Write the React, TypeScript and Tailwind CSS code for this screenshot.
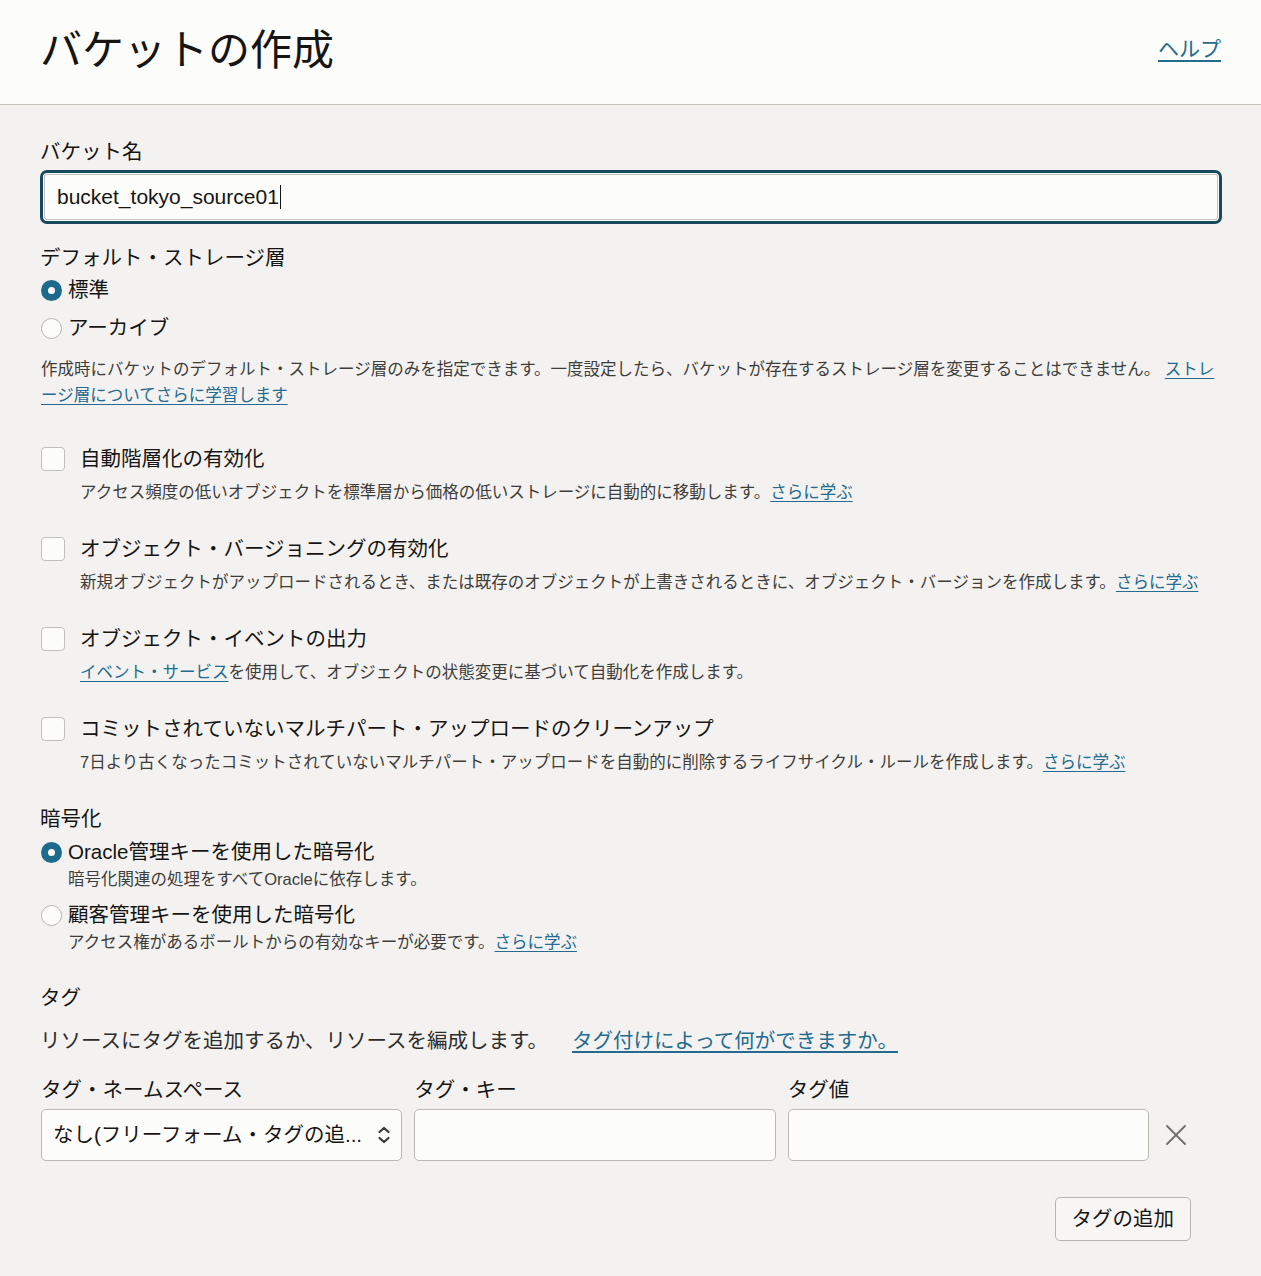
import React from 'react';

const font = "font-['Liberation_Sans','Noto_Sans_CJK_JP',sans-serif]";
const link = 'text-[#246b8f] underline underline-offset-[3px] decoration-1';

const Radio = ({ checked }: { checked?: boolean }) =>
  checked ? (
    <span className="w-[21px] h-[21px] rounded-full bg-[#1e6a8d] flex items-center justify-center shrink-0">
      <span className="w-[7px] h-[7px] rounded-full bg-white" />
    </span>
  ) : (
    <span className="w-[21px] h-[21px] rounded-full bg-[#fcfcfb] border border-[#b8b4ae] shrink-0" />
  );

const Check = ({ label, children }: { label: string; children: React.ReactNode }) => (
  <div className="flex">
    <span className="w-[24px] h-[24px] mt-[2px] ml-[1px] rounded-[4px] bg-[#fcfcfb] border border-[#c2beb8] shrink-0" />
    <div className="ml-[15px]">
      <div className="text-[20.5px] leading-[28px] text-[#161513]">{label}</div>
      <div className="mt-[6px] text-[16.5px] leading-[26px] text-[#3f3d3a]">{children}</div>
    </div>
  </div>
);

export default function App() {
  return (
    <div className={`${font} min-h-[1276px] bg-[#f3f2f1] text-[#161513]`}>
      <header className="h-[105px] bg-[#fcfcfb] border-b border-[#c4c1bd] flex items-center justify-between pl-[40px] pr-[40px]">
        <h1 className="text-[42px] leading-[50px] mt-[-2px] text-[#161513]">バケットの作成</h1>
        <a className="text-[21px] leading-[28px] text-[#246b8f] underline underline-offset-[4px] decoration-[2px] mt-[-6px]">ヘルプ</a>
      </header>

      <main className="pl-[40px] pr-[39px] pt-[33px] pb-[35px]">
        <div className="text-[20.5px] leading-[28px]">バケット名</div>
        <div className="mt-[4px] h-[54px] rounded-[7px] border-[3px] border-[#17485c] bg-[#fcfcfb] shadow-[inset_0_0_0_1px_#fff,inset_0_0_0_2px_#c6c2bd] flex items-center pl-[14px]">
          <span className="text-[21px] text-[#161513]">bucket_tokyo_source01</span>
          <span className="w-[1px] h-[24px] bg-[#161513] ml-[1px]" />
        </div>

        <div className="mt-[20px] text-[20.5px] leading-[28px]">デフォルト・ストレージ層</div>
        <div className="mt-[4px] flex items-center gap-[6px] pl-[1px]">
          <Radio checked />
          <span className="text-[20.5px] leading-[28px]">標準</span>
        </div>
        <div className="mt-[10px] flex items-center gap-[6px] pl-[1px]">
          <Radio />
          <span className="text-[20.5px] leading-[28px]">アーカイブ</span>
        </div>
        <p className="mt-[14px] text-[16.5px] leading-[26px] text-[#3f3d3a] pl-[1px]">
          作成時にバケットのデフォルト・ストレージ層のみを指定できます。一度設定したら、バケットが存在するストレージ層を変更することはできません。{' '}
          <a className={link}>ストレージ層についてさらに学習します</a>
        </p>

        <div className="mt-[37px] flex flex-col gap-[30px]">
          <Check label="自動階層化の有効化">
            アクセス頻度の低いオブジェクトを標準層から価格の低いストレージに自動的に移動します。<a className={link}>さらに学ぶ</a>
          </Check>
          <Check label="オブジェクト・バージョニングの有効化">
            新規オブジェクトがアップロードされるとき、または既存のオブジェクトが上書きされるときに、オブジェクト・バージョンを作成します。<a className={link}>さらに学ぶ</a>
          </Check>
          <Check label="オブジェクト・イベントの出力">
            <a className={link}>イベント・サービス</a>を使用して、オブジェクトの状態変更に基づいて自動化を作成します。
          </Check>
          <Check label="コミットされていないマルチパート・アップロードのクリーンアップ">
            7日より古くなったコミットされていないマルチパート・アップロードを自動的に削除するライフサイクル・ルールを作成します。<a className={link}>さらに学ぶ</a>
          </Check>
        </div>

        <div className="mt-[30px] text-[20.5px] leading-[28px]">暗号化</div>
        <div className="mt-[5px] flex items-center gap-[6px] pl-[1px]">
          <Radio checked />
          <span className="text-[20.5px] leading-[28px]">Oracle管理キーを使用した暗号化</span>
        </div>
        <div className="pl-[28px] text-[16.5px] leading-[26px] text-[#3f3d3a]">暗号化関連の処理をすべてOracleに依存します。</div>
        <div className="mt-[9px] flex items-center gap-[6px] pl-[1px]">
          <Radio />
          <span className="text-[20.5px] leading-[28px]">顧客管理キーを使用した暗号化</span>
        </div>
        <div className="pl-[28px] text-[16.5px] leading-[26px] text-[#3f3d3a]">
          アクセス権があるボールトからの有効なキーが必要です。<a className={link}>さらに学ぶ</a>
        </div>

        <div className="mt-[29px] text-[20.5px] leading-[28px]">タグ</div>
        <p className="mt-[15px] text-[20.5px] leading-[28px] text-[#2e2c2a]">
          リソースにタグを追加するか、リソースを編成します。
          <a className={`${link} ml-[24px] decoration-[2px]`}>タグ付けによって何ができますか。 </a>
        </p>

        <div className="mt-[21px] pr-[31px] pl-[1px]">
          <div className="grid grid-cols-[minmax(0,1fr)_minmax(0,1fr)_minmax(0,1fr)_30px] gap-x-[12px] gap-y-[5px] items-center">
            <div className="text-[20.5px] leading-[28px]">タグ・ネームスペース</div>
            <div className="text-[20.5px] leading-[28px]">タグ・キー</div>
            <div className="text-[20.5px] leading-[28px]">タグ値</div>
            <div />
            <div className="h-[52px] rounded-[5px] border border-[#bcb8b2] bg-[#fcfcfb] flex items-center pl-[11px] pr-[10px]">
              <span className="flex-1 min-w-0 text-[20.5px] text-[#161513] whitespace-nowrap overflow-hidden">なし(フリーフォーム・タグの追...</span>
              <svg width="14" height="20" viewBox="0 0 14 20" className="shrink-0 ml-[6px]" fill="none" stroke="#3a3836" strokeWidth="2.2" strokeLinecap="round" strokeLinejoin="round">
                <path d="M2.5 7 L7 3 L11.5 7" />
                <path d="M2.5 13 L7 17 L11.5 13" />
              </svg>
            </div>
            <div className="h-[52px] rounded-[5px] border border-[#bcb8b2] bg-[#fcfcfb]" />
            <div className="h-[52px] rounded-[5px] border border-[#bcb8b2] bg-[#fcfcfb]" />
            <div className="flex items-center justify-center">
              <svg width="22" height="22" viewBox="0 0 22 22" stroke="#6f6c68" strokeWidth="1.8" strokeLinecap="round">
                <path d="M2 2 L20 20 M20 2 L2 20" />
              </svg>
            </div>
          </div>
          <div className="mt-[36px] flex justify-end">
            <button className="h-[44px] px-[16px] rounded-[5px] border border-[#b8b4ae] bg-[#f7f6f5] text-[20.5px] text-[#161513]">タグの追加</button>
          </div>
        </div>
      </main>
    </div>
  );
}
